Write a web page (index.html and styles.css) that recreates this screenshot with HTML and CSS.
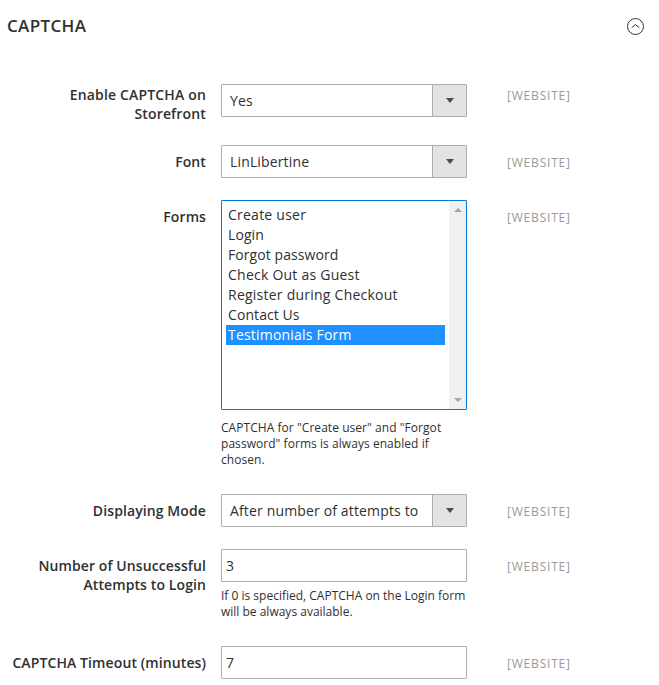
FILE: index.html
```
<!DOCTYPE html>
<html lang="en"><head><meta charset="utf-8"><title>CAPTCHA</title><link rel="stylesheet" href="styles.css"></head>
<body>
<header class="head"><h1>CAPTCHA</h1>
<svg class="toggle" viewBox="0 0 17 17"><circle cx="8.5" cy="8.5" r="8"/><path d="M4.7 9.6 8.5 6.6l3.8 3"/></svg></header>
<main class="form">
<div class="row enable"><label>Enable CAPTCHA on<br>Storefront</label><div class="control"><div class="select"><span class="value">Yes</span><span class="arrow"></span></div></div><span class="scope">[WEBSITE]</span></div>
<div class="row font"><label>Font</label><div class="control"><div class="select"><span class="value">LinLibertine</span><span class="arrow"></span></div></div><span class="scope">[WEBSITE]</span></div>
<div class="row forms"><label>Forms</label><div class="control"><div class="listbox"><ul><li>Create user</li><li class="tight">Login</li><li class="tight">Forgot password</li><li>Check Out as Guest</li><li>Register during Checkout</li><li class="tight">Contact Us</li><li class="selected">Testimonials Form</li></ul><div class="scrollbar"><i class="up"></i><i class="down"></i></div></div><p class="note">CAPTCHA for "Create user" and "Forgot<br>password" forms is always enabled if<br>chosen.</p></div><span class="scope">[WEBSITE]</span></div>
<div class="row mode"><label>Displaying Mode</label><div class="control"><div class="select"><span class="value">After number of attempts to</span><span class="arrow"></span></div></div><span class="scope">[WEBSITE]</span></div>
<div class="row attempts"><label>Number of Unsuccessful<br>Attempts to Login</label><div class="control"><div class="input">3</div><p class="note">If 0 is specified, CAPTCHA on the Login form<br>will be always available.</p></div><span class="scope">[WEBSITE]</span></div>
<div class="row timeout"><label>CAPTCHA Timeout (minutes)</label><div class="control"><div class="input">7</div></div><span class="scope">[WEBSITE]</span></div>
</main></body></html>
```
FILE: styles.css
```
* { box-sizing: border-box; }
body { margin: 0; background: #fff; color: #303030; font: 14px/20px "Open Sans", sans-serif; overflow: hidden; }
.head { height: 84px; padding: 16px 15px 0 7px; display: flex; justify-content: space-between; align-items: flex-start; }
h1 { margin: 0; font-size: 17px; line-height: 20px; font-weight: 600; letter-spacing: .35px; }
.toggle { width: 17px; height: 17px; margin-top: 2px; fill: none; stroke: #303030; stroke-width: 1; }
.row { display: grid; grid-template-columns: 206px 246px 1fr; column-gap: 15px; align-items: start; }
.enable { height: 61px; }
.font { height: 55px; }
.forms { height: 294px; }
.mode { height: 55px; }
.attempts { height: 97px; }
label { text-align: right; font-weight: 600; letter-spacing: .1px; line-height: 19px; padding-top: 1px; white-space: nowrap; }
.enable label { letter-spacing: .16px; }
.font label, .forms label, .mode label, .attempts label, .timeout label { padding-top: 7px; }
.scope { margin-left: 25px; padding-top: 2px; font-size: 12px; letter-spacing: .8px; color: #999; }
.row:not(.enable) .scope { padding-top: 8px; }
.select { display: flex; height: 33px; border: 1px solid #adadad; border-radius: 1px; }
.value { flex: 1; padding: 6px 0 0 8px; margin-right: 13px; overflow: hidden; white-space: nowrap; letter-spacing: .15px; }
.arrow { width: 34px; border-left: 1px solid #adadad; background: #e3e3e3; display: grid; place-items: center; }
.arrow::after { content: ""; border: 4px solid transparent; border-top: 5px solid #514943; border-bottom: 0; }
.listbox { height: 210px; border: 1px solid #007bdb; border-radius: 1px; display: flex; padding: 0 0 0 4px; }
ul { list-style: none; margin: 4px 4px 0 0; padding: 0; flex: 1; }
li { height: 20px; padding-left: 2px; letter-spacing: .24px; }
li.tight { letter-spacing: .08px; }
.selected { background: #1e90ff; color: #fff; letter-spacing: .2px; }
.scrollbar { width: 17px; background: #f0f0f0; display: flex; flex-direction: column; justify-content: space-between; align-items: center; padding: 7px 0; }
.up, .down { border: 4px solid transparent; }
.up { border-bottom-color: #a3a3a3; border-top: 0; }
.down { border-top-color: #a3a3a3; border-bottom: 0; }
.note { margin: 10px 0 0; font-size: 12px; line-height: 16px; white-space: nowrap; letter-spacing: .05px; }
.attempts .note { margin-top: 6px; letter-spacing: 0; }
.input { height: 33px; border: 1px solid #adadad; border-radius: 1px; padding: 6px 0 0 4px; }
```
